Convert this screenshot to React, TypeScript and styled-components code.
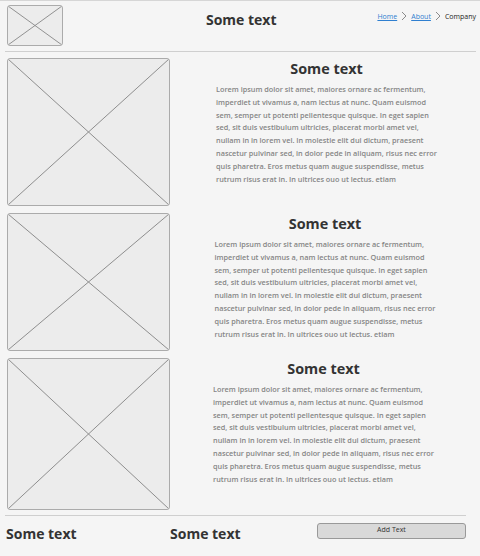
import styled, { createGlobalStyle } from 'styled-components'

const GlobalStyle = createGlobalStyle`
  html, body {
    margin: 0;
    padding: 0;
    background: #f5f5f5;
  }
  body {
    font-family: 'Open Sans', 'Lato', sans-serif;
  }
`

const lorem = [
  'Lorem ipsum dolor sit amet, maiores ornare ac fermentum,',
  'imperdiet ut vivamus a, nam lectus at nunc. Quam euismod',
  'sem, semper ut potenti pellentesque quisque. In eget sapien',
  'sed, sit duis vestibulum ultricies, placerat morbi amet vel,',
  'nullam in in lorem vel. In molestie elit dui dictum, praesent',
  'nascetur pulvinar sed, in dolor pede in aliquam, risus nec error',
  'quis pharetra. Eros metus quam augue suspendisse, metus',
  'rutrum risus erat in.  In ultrices ouo ut lectus. etiam',
]

const rows = [
  { id: 1, height: 148, shift: 3 },
  { id: 2, height: 138, shift: 0 },
  { id: 3, height: 152, shift: -3 },
]

const Placeholder = ({ width, height }: { width: number; height: number }) => (
  <Frame style={{ width, height }}>
    <svg width='100%' height='100%' viewBox={`0 0 ${width} ${height}`} preserveAspectRatio='none'>
      <line x1='0' y1='0' x2={width} y2={height} stroke='#8c8c8c' strokeWidth='1' />
      <line x1={width} y1='0' x2='0' y2={height} stroke='#8c8c8c' strokeWidth='1' />
    </svg>
  </Frame>
)

const Chevron = () => (
  <svg width='6' height='10' viewBox='0 0 6 10'>
    <path d='M1 1 L5 5 L1 9' fill='none' stroke='#8a8a8a' strokeWidth='1' />
  </svg>
)

const App = () => {
  return (
    <Page>
      <GlobalStyle />
      <Header>
        <Placeholder width={56} height={41} />
        <HeaderTitle>Some text</HeaderTitle>
        <Crumbs>
          <Crumb href='#'>Home</Crumb>
          <Chevron />
          <Crumb href='#'>About</Crumb>
          <Chevron />
          <Current>Company</Current>
        </Crumbs>
      </Header>
      <Rule />
      <List>
        {rows.map((row) => (
          <Row key={row.id}>
            <Placeholder width={163} height={row.height} />
            <Content style={{ marginLeft: row.shift }}>
              <Title>Some text</Title>
              <Body>
                {lorem.map((line, i) => (
                  <Line key={i}>{line}</Line>
                ))}
              </Body>
            </Content>
          </Row>
        ))}
      </List>
      <FooterRule />
      <Footer>
        <FooterText>Some text</FooterText>
        <FooterText>Some text</FooterText>
        <AddButton>Add Text</AddButton>
      </Footer>
    </Page>
  )
}

export default App

const Page = styled.div`
  width: 480px;
  height: 556px;
  box-sizing: border-box;
  border-top: 1px solid #d6d6d6;
  overflow: hidden;
`

const Frame = styled.div`
  box-sizing: border-box;
  flex: none;
  background: #ececec;
  border: 1.5px solid #ababab;
  border-radius: 3px;
  overflow: hidden;

  svg {
    display: block;
  }
`

const Header = styled.div`
  display: flex;
  align-items: flex-start;
  padding: 4px 4px 0 7px;
  height: 45px;
  box-sizing: border-box;
`

const HeaderTitle = styled.div`
  flex: 1;
  text-align: center;
  font-weight: 700;
  font-size: 14px;
  color: #333;
  padding-top: 5px;
  padding-left: 42px;
`

const Crumbs = styled.div`
  display: flex;
  align-items: center;
  gap: 4px;
  padding-top: 6px;
  font-size: 7px;
`

const Crumb = styled.a`
  color: #2f7fd0;
  text-decoration: underline;
  font-weight: 500;
`

const Current = styled.span`
  color: #222;
  font-weight: 500;
`

const Rule = styled.div`
  height: 1px;
  background: #cfcfcf;
  margin: 5px 4px 6px 5px;
`

const List = styled.div`
  display: flex;
  flex-direction: column;
  gap: 7px;
  padding-left: 7px;
`

const Row = styled.div`
  display: flex;
`

const Content = styled.div`
  flex: 1;
  display: flex;
  flex-direction: column;
  align-items: center;
  padding-top: 1px;
`

const Title = styled.div`
  font-weight: 700;
  font-size: 14.4px;
  color: #333;
  line-height: 20px;
`

const Body = styled.div`
  margin-top: 4px;
  font-size: 7.3px;
  line-height: 12.8px;
  color: #858585;
  font-weight: 600;
`

const Line = styled.div`
  white-space: nowrap;
`

const FooterRule = styled.div`
  height: 1px;
  background: #cfcfcf;
  margin: 5px 14px 0 5px;
`

const Footer = styled.div`
  display: flex;
  align-items: flex-start;
  padding: 5px 0 0 6px;
`

const FooterText = styled.div`
  width: 164px;
  font-weight: 700;
  font-size: 14px;
  color: #333;
  padding-top: 3px;
`

const AddButton = styled.button`
  width: 149px;
  height: 16px;
  margin-left: -17px;
  margin-top: 2px;
  box-sizing: border-box;
  background: #d9d9d9;
  border: 1px solid #999;
  border-bottom-width: 1.5px;
  border-radius: 3px;
  font-family: inherit;
  font-size: 7px;
  color: #333;
  padding: 0 0 2px 0;
  line-height: 10px;
`
